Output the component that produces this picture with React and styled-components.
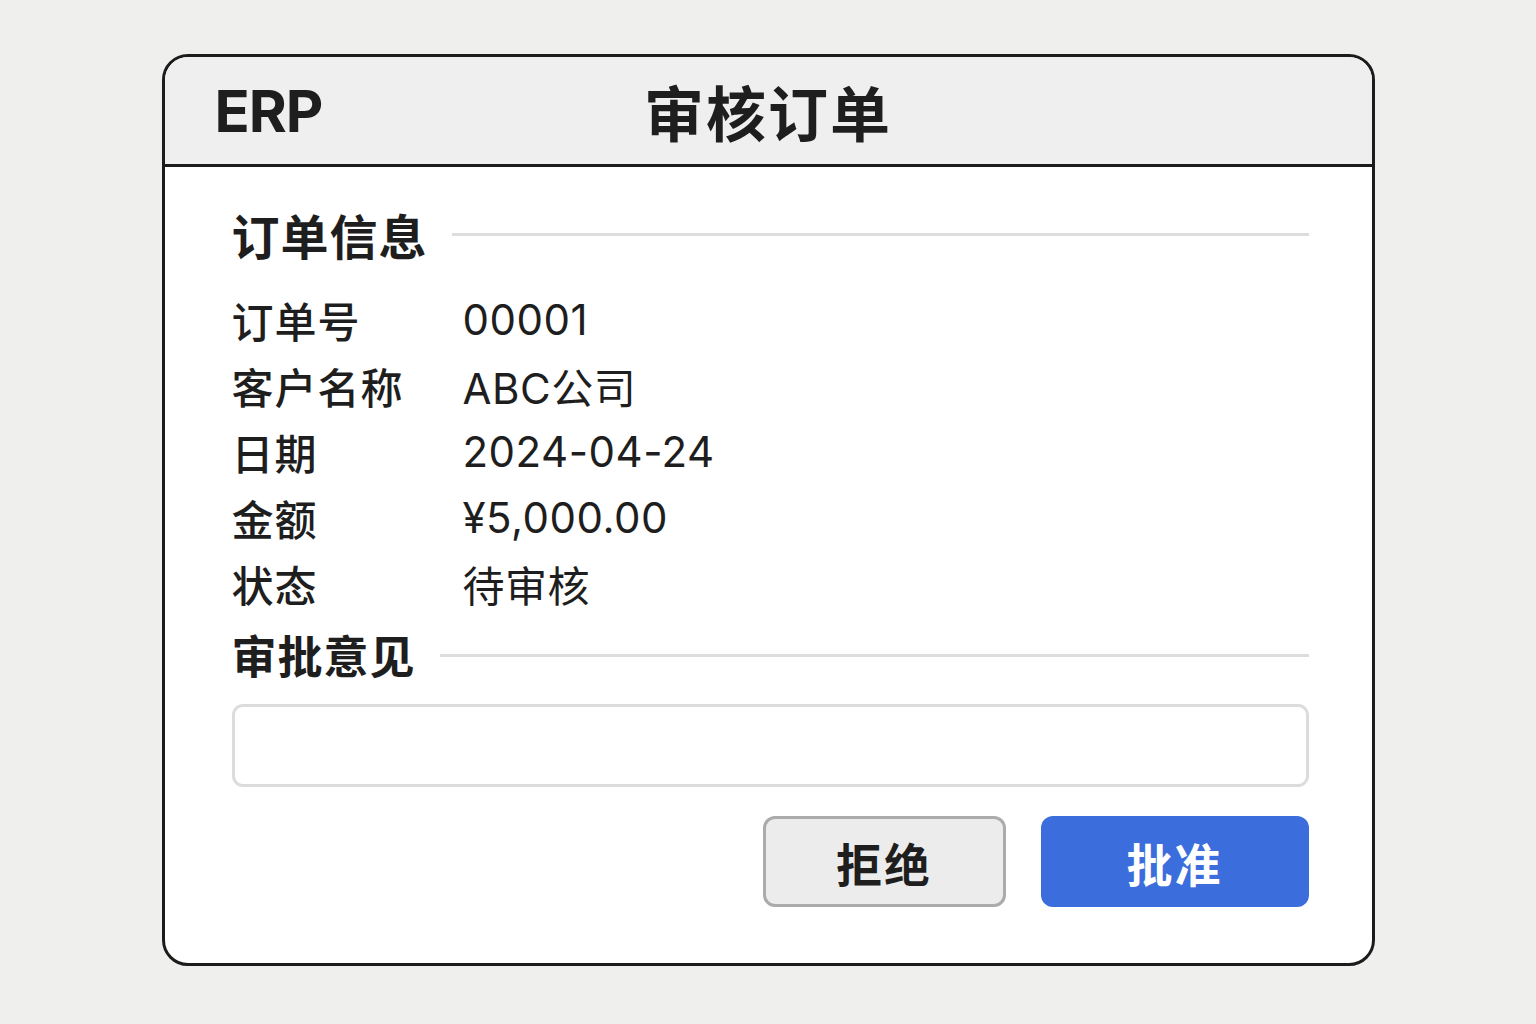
import React from 'react'
import styled, { createGlobalStyle } from 'styled-components'

const GlobalStyle = createGlobalStyle`
    html, body {
        margin: 0;
        padding: 0;
        background: #efefee;
    }
    body {
        font-family: Inter, "Noto Sans CJK SC", sans-serif;
        color: #1e1e1e;
    }
`

const Page = styled.div`
    width: 1536px;
    height: 1024px;
    padding-top: 54px;
    box-sizing: border-box;
`

const Card = styled.div`
    width: 1213px;
    height: 912px;
    margin: 0 auto;
    box-sizing: border-box;
    border: 3px solid #1c1c1c;
    border-radius: 26px;
    overflow: hidden;
    background: #fff;
    display: flex;
    flex-direction: column;
`

const Header = styled.div`
    height: 107px;
    flex-shrink: 0;
    background: #efefef;
    border-bottom: 3px solid #1c1c1c;
    display: grid;
    grid-template-columns: 1fr auto 1fr;
    align-items: center;
    padding: 0 50px;
`

const Brand = styled.div`
    font-family: Inter, "Noto Sans CJK SC", sans-serif;
    font-size: 58px;
    font-weight: 700;
    letter-spacing: -1px;
    line-height: 1;
`

const Title = styled.h1`
    margin: 0;
    font-family: "Noto Sans CJK SC", sans-serif;
    font-size: 60px;
    font-weight: 700;
    letter-spacing: 2px;
    line-height: 1;
`

const Body = styled.div`
    flex: 1;
    padding: 43px 63px 0 67px;
    display: flex;
    flex-direction: column;
`

const SectionHead = styled.div`
    display: flex;
    align-items: center;
    gap: ${(p) => p.gap}px;
    margin-top: ${(p) => p.top || 0}px;
`

const SectionTitle = styled.h2`
    margin: 0;
    font-family: "Noto Sans CJK SC", sans-serif;
    font-size: ${(p) => p.size}px;
    font-weight: 700;
    line-height: 1;
    letter-spacing: 1px;
    white-space: nowrap;
`

const Rule = styled.div`
    flex: 1;
    height: 3px;
    background: #dddddd;
    margin-top: 1px;
`

const InfoList = styled.div`
    margin-top: 28px;
    display: flex;
    flex-direction: column;
`

const InfoRow = styled.div`
    display: grid;
    grid-template-columns: 231px 1fr;
    align-items: center;
    height: 66px;
`

const Label = styled.span`
    font-family: "Noto Sans CJK SC", sans-serif;
    font-size: 42px;
    font-weight: 500;
    letter-spacing: 1px;
`

const Value = styled.span`
    font-family: Inter, "Noto Sans CJK SC", sans-serif;
    font-size: 42px;
    font-weight: 400;
    letter-spacing: 0.5px;
`

const Comment = styled.textarea`
    margin-top: 27px;
    height: 83px;
    box-sizing: border-box;
    border: 3px solid #dcdcdc;
    border-radius: 11px;
    resize: none;
    outline: none;
    font-family: "Noto Sans CJK SC", sans-serif;
    font-size: 24px;
    padding: 12px 16px;
    background: #fff;
`

const Actions = styled.div`
    margin-top: 29px;
    display: flex;
    justify-content: flex-end;
    gap: 35px;
`

const Button = styled.button`
    width: ${(p) => p.width}px;
    height: 91px;
    box-sizing: border-box;
    border-radius: 12px;
    font-family: "Noto Sans CJK SC", sans-serif;
    font-size: 46px;
    font-weight: 700;
    letter-spacing: 2px;
    line-height: 1;
    cursor: pointer;
    border: ${(p) => (p.primary ? '0' : '3px solid #ababab')};
    background: ${(p) => (p.primary ? '#3b6ddc' : '#ececec')};
    color: ${(p) => (p.primary ? '#ffffff' : '#1e1e1e')};
`

const rows = [
    ['订单号', '00001'],
    ['客户名称', 'ABC公司'],
    ['日期', '2024-04-24'],
    ['金额', '¥5,000.00'],
    ['状态', '待审核'],
]

export default function App() {
    return (
        <Page>
            <GlobalStyle />
            <Card>
                <Header>
                    <Brand>ERP</Brand>
                    <Title>审核订单</Title>
                    <span />
                </Header>
                <Body>
                    <SectionHead gap={24}>
                        <SectionTitle size={48}>订单信息</SectionTitle>
                        <Rule />
                    </SectionHead>
                    <InfoList>
                        {rows.map(([k, v]) => (
                            <InfoRow key={k}>
                                <Label>{k}</Label>
                                <Value>{v}</Value>
                            </InfoRow>
                        ))}
                    </InfoList>
                    <SectionHead gap={24} top={16}>
                        <SectionTitle size={45}>审批意见</SectionTitle>
                        <Rule />
                    </SectionHead>
                    <Comment />
                    <Actions>
                        <Button width={243}>拒绝</Button>
                        <Button width={268} primary>批准</Button>
                    </Actions>
                </Body>
            </Card>
        </Page>
    )
}
